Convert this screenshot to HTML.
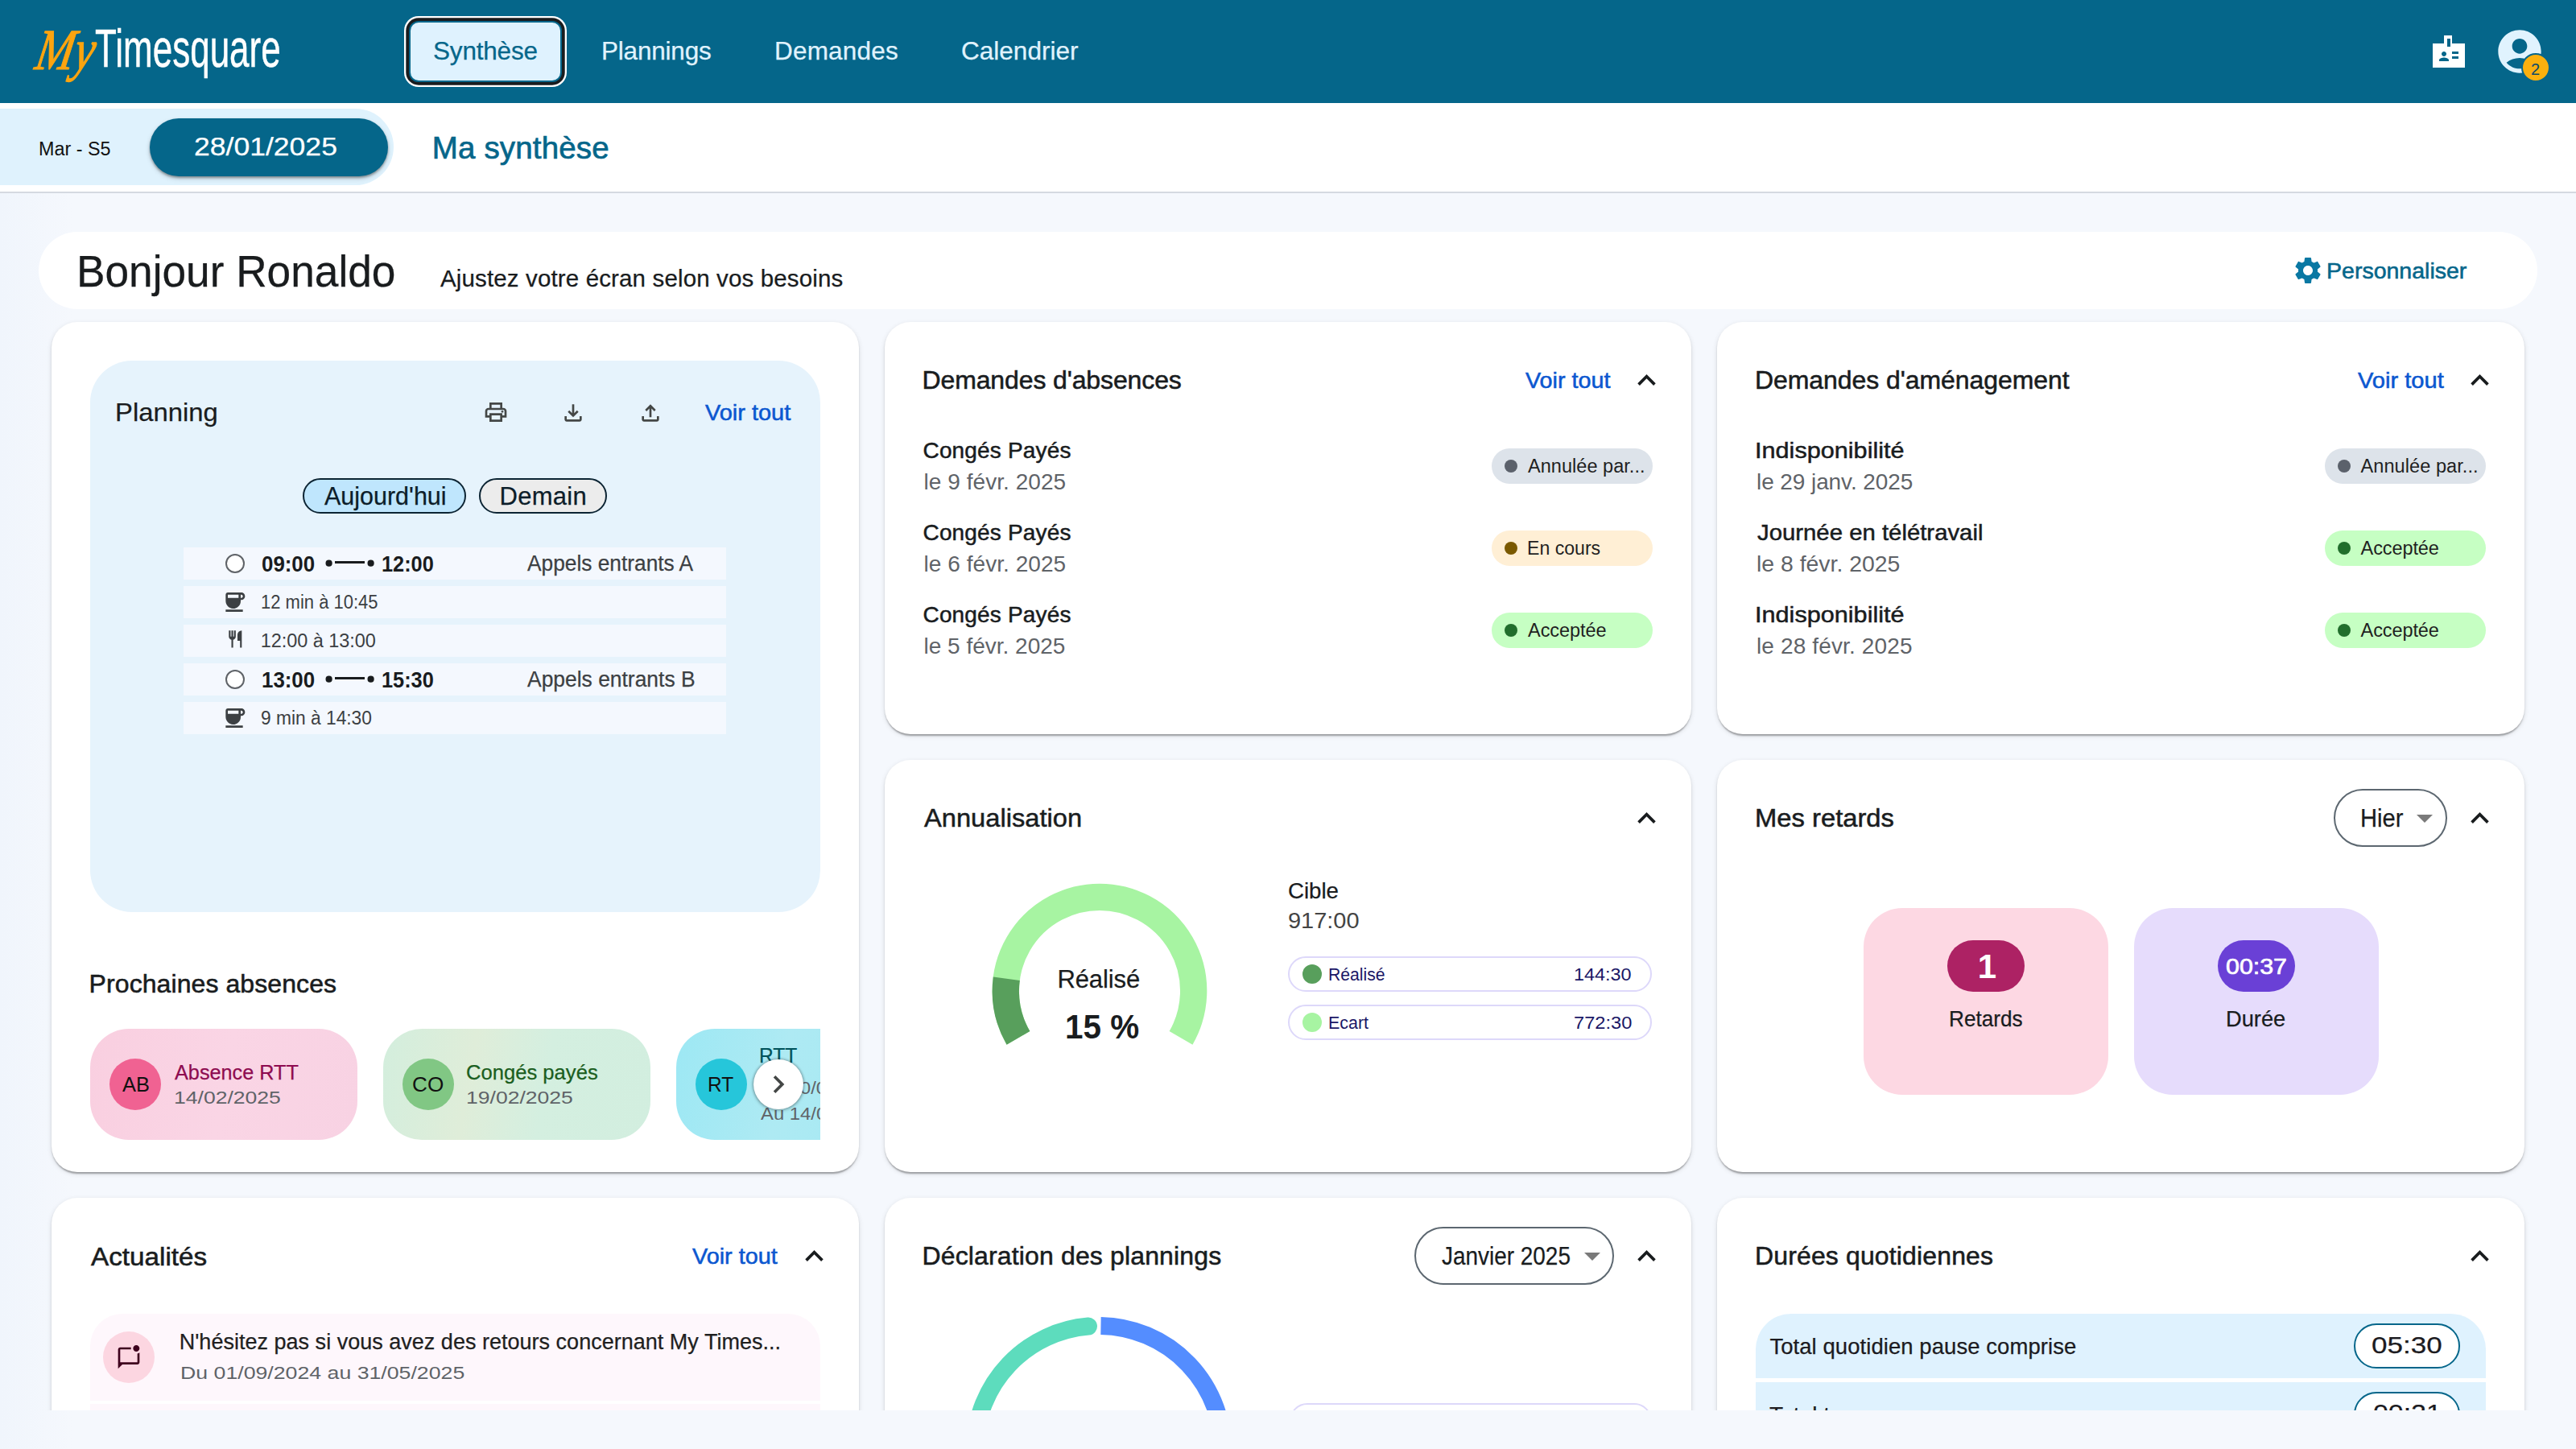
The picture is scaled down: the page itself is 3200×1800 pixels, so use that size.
<!DOCTYPE html>
<html lang="fr"><head><meta charset="utf-8"><title>My Timesquare - Ma synthèse</title>
<style>
html,body{margin:0;padding:0}
body{width:3200px;height:1800px;overflow:hidden;position:relative;background:#f5f8fd;font-family:"Liberation Sans",sans-serif}
.t{position:absolute;white-space:nowrap;display:block}
.a{position:absolute;box-sizing:border-box}
.card{position:absolute;box-sizing:border-box;background:#fff;border-radius:32px;width:1002.67px;box-shadow:0 4px 2px -2px rgba(0,0,0,.2),0 2px 2px 0 rgba(0,0,0,.14),0 2px 6px 0 rgba(0,0,0,.12)}
.row{position:absolute;left:228px;width:674px;height:40px;background:#f4f8fe}
.chip{position:absolute;box-sizing:border-box;height:44px;border:2px solid #0c2433;border-radius:22px}
.st{position:absolute;width:200px;height:44px;border-radius:22px}
.st i{position:absolute;left:16px;top:14px;width:16px;height:16px;border-radius:50%}
.av{position:absolute;width:64px;height:64px;border-radius:50%}
.ab{position:absolute;width:332px;height:138px;border-radius:48px;top:1278px}
.lg{position:absolute;box-sizing:border-box;left:1600px;width:452px;height:44px;border:2px solid #ddd8fa;border-radius:22px;background:#fff}
.lg i{position:absolute;left:16px;top:8px;width:24px;height:24px;border-radius:50%}
.dd{position:absolute;box-sizing:border-box;height:72px;border:2px solid #5c6770;border-radius:36px;background:#fff}
.tri{position:absolute;width:0;height:0;border-left:10px solid transparent;border-right:10px solid transparent;border-top:10px solid #7a7a7a}
svg{position:absolute;overflow:visible}
</style></head>
<body>
<div class="a" style="left:0;top:240px;width:90px;height:1560px;background:linear-gradient(90deg,#f0f5fc 0,#f5f8fd 100%)"></div>
<!-- ================= scroll area ================= -->
<div class="a" style="left:0;top:240px;width:3200px;height:1512px;overflow:hidden">
<div class="a" style="left:0;top:-240px;width:3200px;height:2100px">
<!-- hello bar -->
<div class="a" style="left:48px;top:288px;width:3104px;height:96px;border-radius:48px;background:#fff"></div>
<svg style="left:2846.500px;top:316px" width="40" height="40" viewBox="0 0 24 24"><path fill="#0a78a3" d="M19.140 12.940c.040-.3.060-.61.060-.940 0-.320-.020-.640-.070-.940l2.030-1.580c.180-.140.230-.410.120-.610l-1.920-3.320c-.120-.220-.370-.290-.590-.220l-2.390.96c-.5-.380-1.030-.7-1.620-.94l-.36-2.540c-.040-.240-.240-.410-.480-.410h-3.840c-.240 0-.430.170-.470.410l-.36 2.540c-.59.240-1.130.57-1.620.94l-2.390-.96c-.220-.080-.470 0-.59.220L2.740 8.870c-.12.210-.08.470.12.610l2.030 1.580c-.050.3-.090.630-.090.940s.020.640.070.940l-2.030 1.580c-.180.140-.230.410-.120.610l1.920 3.320c.12.220.370.290.590.220l2.390-.96c.5.380 1.030.7 1.620.94l.36 2.540c.050.240.240.410.480.410h3.840c.240 0 .440-.170.470-.410l.36-2.540c.59-.240 1.130-.560 1.620-.940l2.390.96c.220.080.470 0 .59-.220l1.920-3.320c.12-.220.070-.470-.12-.610l-2.010-1.580zM12 15.600c-1.980 0-3.600-1.620-3.600-3.600s1.620-3.600 3.600-3.600 3.600 1.620 3.600 3.600-1.620 3.600-3.600 3.600z"/></svg>

<!-- cards -->
<div class="card" style="left:64px;top:400px;height:1056px"></div>
<div class="card" style="left:1098.67px;top:400px;height:512px"></div>
<div class="card" style="left:2133.33px;top:400px;height:512px"></div>
<div class="card" style="left:1098.67px;top:944px;height:512px"></div>
<div class="card" style="left:2133.33px;top:944px;height:512px"></div>
<div class="card" style="left:64px;top:1488px;height:512px"></div>
<div class="card" style="left:1098.67px;top:1488px;height:512px"></div>
<div class="card" style="left:2133.33px;top:1488px;height:512px"></div>

<!-- ===== card 1 : planning ===== -->
<div class="a" style="left:112px;top:448px;width:906.67px;height:685px;border-radius:52px;background:#e6f3fc"></div>
<svg style="left:600px;top:496px" width="32" height="32" viewBox="0 0 24 24"><path fill="#444746" d="M19 8h-1V3H6v5H5c-1.660 0-3 1.340-3 3v6h4v4h12v-4h4v-6c0-1.660-1.340-3-3-3zM8 5h8v3H8V5zm8 14H8v-4h8v4zm2-4v-2H6v2H4v-4c0-.550.450-1 1-1h14c.550 0 1 .450 1 1v4h-2z"/><circle fill="#444746" cx="18" cy="11.500" r="1"/></svg>
<svg style="left:696px;top:496.500px" width="32" height="32" viewBox="0 0 24 24"><path fill="#444746" d="M18 15v3H6v-3H4v3c0 1.100.9 2 2 2h12c1.100 0 2-.9 2-2v-3h-2zm-1-4l-1.410-1.410L13 12.170V4h-2v8.170L8.410 9.590 7 11l5 5 5-5z"/></svg>
<svg style="left:792px;top:496.500px" width="32" height="32" viewBox="0 0 24 24"><path fill="#444746" d="M18 15v3H6v-3H4v3c0 1.100.9 2 2 2h12c1.100 0 2-.9 2-2v-3h-2zM7 9l1.410 1.410L11 7.830V16h2V7.830l2.590 2.580L17 9l-5-5-5 5z"/></svg>
<div class="chip" style="left:376px;top:594px;width:203px;background:#bfe6fd"></div>
<div class="chip" style="left:595px;top:594px;width:159px;background:#ececec"></div>
<div class="row" style="top:680px"></div><div class="row" style="top:728px"></div><div class="row" style="top:776px"></div><div class="row" style="top:824px"></div><div class="row" style="top:872px"></div>
<div class="a" style="left:279.800px;top:687.700px;width:24px;height:24px;border-radius:50%;border:2px solid #5f6368;background:#fff"></div>
<div class="a" style="left:279.800px;top:831.700px;width:24px;height:24px;border-radius:50%;border:2px solid #5f6368;background:#fff"></div>
<svg style="left:404px;top:695px" width="62" height="10" viewBox="0 0 62 10"><circle cx="4.600" cy="4.700" r="4.100" fill="#191c1e"/><circle cx="56.600" cy="4.700" r="4.100" fill="#191c1e"/><rect x="12" y="2" width="37" height="3" fill="#191c1e"/></svg>
<svg style="left:404px;top:839px" width="62" height="10" viewBox="0 0 62 10"><circle cx="4.600" cy="4.700" r="4.100" fill="#191c1e"/><circle cx="56.600" cy="4.700" r="4.100" fill="#191c1e"/><rect x="12" y="2" width="37" height="3" fill="#191c1e"/></svg>
<svg style="left:275px;top:732.400px" width="32" height="32" viewBox="0 0 24 24"><path fill="#3c4043" d="M18.500 3H6c-1.100 0-2 .9-2 2v5.710c0 3.830 2.950 7.180 6.780 7.290 3.960.12 7.220-3.060 7.220-7v-1h.5c1.930 0 3.500-1.570 3.500-3.500S20.430 3 18.500 3zM16 5v3H6V5h10zm2.500 3H18V5h.5c.83 0 1.500.67 1.500 1.500S19.330 8 18.500 8zM4 19h16v2H4v-2z"/></svg>
<svg style="left:275px;top:876.400px" width="32" height="32" viewBox="0 0 24 24"><path fill="#3c4043" d="M18.500 3H6c-1.100 0-2 .9-2 2v5.710c0 3.830 2.950 7.180 6.780 7.290 3.960.12 7.220-3.060 7.220-7v-1h.5c1.930 0 3.500-1.570 3.500-3.500S20.430 3 18.500 3zM16 5v3H6V5h10zm2.500 3H18V5h.5c.83 0 1.500.67 1.500 1.500S19.330 8 18.500 8zM4 19h16v2H4v-2z"/></svg>
<svg style="left:279.800px;top:781.400px" width="25.700" height="25.700" viewBox="0 -960 960 960"><path fill="#3c4043" d="M280-80v-366q-51-14-85.500-56T160-600v-280h80v280h40v-280h80v280h40v-280h80v280q0 56-34.500 98T360-446v366h-80Zm400 0v-320H560v-280q0-83 58.500-141.500T760-880v800h-80Z"/></svg>
<!-- absences -->
<div class="ab" style="left:112px;background:linear-gradient(100deg,#f9cfe0 0%,#fad5e5 50%,#f8d2e3 100%)"></div>
<div class="av" style="left:136px;top:1315px;background:#f06292"></div>
<div class="ab" style="left:476px;background:linear-gradient(100deg,#d3eedd 0%,#dfedd9 33%,#d4efe0 60%,#d2eedf 100%)"></div>
<div class="av" style="left:500px;top:1315px;background:#81c784"></div>

<!-- ===== card 6 : actualités ===== -->
<div class="a" style="left:112px;top:1631.500px;width:906.67px;height:108.500px;border-radius:40px 40px 0 0;background:#fef7fc"></div>
<div class="a" style="left:112px;top:1744px;width:906.67px;height:108px;background:#fef7fc"></div>
<div class="av" style="left:128px;top:1653.800px;background:#fcd6e1"></div>
<svg style="left:143.900px;top:1670.700px" width="32" height="32" viewBox="0 0 24 24"><path fill="#3e001d" d="M22 6.980V16c0 1.100-.9 2-2 2H6l-4 4V4c0-1.100.9-2 2-2h10.100c-.06.320-.1.660-.1 1s.040.680.1 1H4v12h16V7.900c.74-.15 1.420-.48 2-.92zM16 3c0 1.660 1.340 3 3 3s3-1.340 3-3-1.340-3-3-3-3 1.340-3 3z"/></svg>
<svg style="left:988.500px;top:1537.500px" width="45" height="45" viewBox="0 0 24 24"><path fill="#191c1e" d="M12 8l-6 6 1.410 1.410L12 10.830l4.590 4.580L18 14z"/></svg>

<!-- ===== card 2 ===== -->
<svg style="left:2022.500px;top:449.800px" width="45" height="45" viewBox="0 0 24 24"><path fill="#191c1e" d="M12 8l-6 6 1.410 1.410L12 10.830l4.590 4.580L18 14z"/></svg>
<div class="st" style="left:1853px;top:557px;background:#dde3ea"><i style="background:#5b616b"></i></div>
<div class="st" style="left:1853px;top:659px;background:#ffefd5"><i style="background:#7a5900"></i></div>
<div class="st" style="left:1853px;top:761px;background:#c6ffc3"><i style="background:#216e2c"></i></div>
<!-- ===== card 3 ===== -->
<svg style="left:3057.500px;top:449.800px" width="45" height="45" viewBox="0 0 24 24"><path fill="#191c1e" d="M12 8l-6 6 1.410 1.410L12 10.830l4.590 4.580L18 14z"/></svg>
<div class="st" style="left:2888px;top:557px;background:#dde3ea"><i style="background:#5b616b"></i></div>
<div class="st" style="left:2888px;top:659px;background:#c6ffc3"><i style="background:#216e2c"></i></div>
<div class="st" style="left:2888px;top:761px;background:#c6ffc3"><i style="background:#216e2c"></i></div>

<!-- ===== card 4 : annualisation ===== -->
<svg style="left:2022.500px;top:993.800px" width="45" height="45" viewBox="0 0 24 24"><path fill="#191c1e" d="M12 8l-6 6 1.410 1.410L12 10.830l4.590 4.580L18 14z"/></svg>
<svg style="left:1215.600px;top:1081px" width="300" height="300" viewBox="-150 -150 300 300">
<path d="M -101.040 58.330 A 116.670 116.670 0 1 1 101.040 58.330" fill="none" stroke="#a7f4a2" stroke-width="33.300"/>
<path d="M -101.040 58.330 A 116.670 116.670 0 0 1 -115.670 -15.230" fill="none" stroke="#589f5c" stroke-width="33.300"/>
</svg>
<div class="lg" style="top:1188px"><i style="background:#589f5c"></i></div>
<div class="lg" style="top:1248px"><i style="background:#a7f4a2"></i></div>

<!-- ===== card 5 : retards ===== -->
<svg style="left:3057.500px;top:993.600px" width="45" height="45" viewBox="0 0 24 24"><path fill="#191c1e" d="M12 8l-6 6 1.410 1.410L12 10.830l4.590 4.580L18 14z"/></svg>
<div class="dd" style="left:2899px;top:980px;width:141px"></div>
<div class="tri" style="left:3001.700px;top:1012px"></div>
<div class="a" style="left:2315px;top:1128px;width:304px;height:232px;border-radius:48px;background:#fdd8e3"></div>
<div class="a" style="left:2651px;top:1128px;width:304px;height:232px;border-radius:48px;background:#e6dcfc"></div>
<div class="a" style="left:2419px;top:1168px;width:96px;height:64px;border-radius:32px;background:#ad2264"></div>
<div class="a" style="left:2755px;top:1168px;width:96px;height:64px;border-radius:32px;background:#6a40d6"></div>

<!-- ===== card 7 : déclaration ===== -->
<svg style="left:2022.500px;top:1537.500px" width="45" height="45" viewBox="0 0 24 24"><path fill="#191c1e" d="M12 8l-6 6 1.410 1.410L12 10.830l4.590 4.580L18 14z"/></svg>
<div class="dd" style="left:1757px;top:1524px;width:248px"></div>
<div class="tri" style="left:1967.500px;top:1556px"></div>
<svg style="left:1165px;top:1601px" width="400" height="400" viewBox="-200 -200 400 400">
<path d="M -153.900 -5 A 154 154 0 0 1 -13 -153.450" fill="none" stroke="#5ddcbd" stroke-width="22" stroke-linecap="round"/>
<path d="M 2.500 -153.980 A 154 154 0 0 1 153.900 5" fill="none" stroke="#548dff" stroke-width="22" stroke-linecap="butt"/>
</svg>
<div class="lg" style="left:1602px;top:1743px;width:450px"></div>

<!-- ===== card 8 : durées ===== -->
<svg style="left:3057.500px;top:1537.500px" width="45" height="45" viewBox="0 0 24 24"><path fill="#191c1e" d="M12 8l-6 6 1.410 1.410L12 10.830l4.590 4.580L18 14z"/></svg>
<div class="a" style="left:2181px;top:1632px;width:907px;height:80px;border-radius:44px 44px 0 0;background:#dff2fe"></div>
<div class="a" style="left:2181px;top:1716.500px;width:907px;height:80px;background:#dff2fe"></div>
<div class="a" style="left:2924px;top:1644px;width:132px;height:56px;border-radius:28px;background:#fff;border:2px solid #05668a"></div>
<div class="a" style="left:2924px;top:1728.500px;width:132px;height:56px;border-radius:28px;background:#fff;border:2px solid #05668a"></div>

<span class="t" style="left:95.13px;top:310.20px;font-size:55px;line-height:55px;color:#191c1e;transform-origin:0 0;transform:scaleX(0.9675);-webkit-text-stroke:0.25px #191c1e;">Bonjour Ronaldo</span>
<span class="t" style="left:547.00px;top:331.45px;font-size:29.5px;line-height:29.5px;color:#191c1e;letter-spacing:0.140px;-webkit-text-stroke:0.25px #191c1e;">Ajustez votre écran selon vos besoins</span>
<span class="t" style="left:2889.96px;top:323.10px;font-size:28px;line-height:28px;color:#05668a;transform-origin:0 0;transform:scaleX(1.0185);-webkit-text-stroke:0.55px #05668a;">Personnaliser</span>
<span class="t" style="left:142.95px;top:496.30px;font-size:32px;line-height:32px;color:#191c1e;transform-origin:0 0;transform:scaleX(1.0253);-webkit-text-stroke:0.25px #191c1e;">Planning</span>
<span class="t" style="left:876.00px;top:498.50px;font-size:28px;line-height:28px;color:#0b57d0;transform-origin:0 0;transform:scaleX(1.0345);-webkit-text-stroke:0.55px #0b57d0;">Voir tout</span>
<span class="t" style="left:402.60px;top:601.00px;font-size:31px;line-height:31px;color:#0c1d29;transform-origin:0 0;transform:scaleX(0.9833);-webkit-text-stroke:0.25px #0c1d29;">Aujourd'hui</span>
<span class="t" style="left:620.60px;top:601.00px;font-size:31px;line-height:31px;color:#0c1d29;letter-spacing:0.244px;-webkit-text-stroke:0.25px #0c1d29;">Demain</span>
<span class="t" style="left:324.54px;top:687.80px;font-size:27px;line-height:27px;color:#191c1e;font-weight:700;transform-origin:0 0;transform:scaleX(0.9576);">09:00</span>
<span class="t" style="left:473.66px;top:687.80px;font-size:27px;line-height:27px;color:#191c1e;font-weight:700;transform-origin:0 0;transform:scaleX(0.9383);">12:00</span>
<span class="t" style="left:655.00px;top:687.20px;font-size:27px;line-height:27px;color:#3c4043;transform-origin:0 0;transform:scaleX(0.9741);-webkit-text-stroke:0.25px #3c4043;">Appels entrants A</span>
<span class="t" style="left:324.54px;top:831.80px;font-size:27px;line-height:27px;color:#191c1e;font-weight:700;transform-origin:0 0;transform:scaleX(0.9576);">13:00</span>
<span class="t" style="left:473.66px;top:831.80px;font-size:27px;line-height:27px;color:#191c1e;font-weight:700;transform-origin:0 0;transform:scaleX(0.9383);">15:30</span>
<span class="t" style="left:655.00px;top:831.20px;font-size:27px;line-height:27px;color:#3c4043;transform-origin:0 0;transform:scaleX(0.9787);-webkit-text-stroke:0.25px #3c4043;">Appels entrants B</span>
<span class="t" style="left:323.86px;top:736.75px;font-size:23.5px;line-height:23.5px;color:#3c4043;transform-origin:0 0;transform:scaleX(0.9365);">12 min à 10:45</span>
<span class="t" style="left:323.80px;top:784.75px;font-size:23.5px;line-height:23.5px;color:#3c4043;letter-spacing:-0.056px;">12:00 à 13:00</span>
<span class="t" style="left:323.83px;top:880.75px;font-size:23.5px;line-height:23.5px;color:#3c4043;transform-origin:0 0;transform:scaleX(0.9687);">9 min à 14:30</span>
<span class="t" style="left:110.60px;top:1206.00px;font-size:32px;line-height:32px;color:#191c1e;letter-spacing:0.080px;-webkit-text-stroke:0.55px #191c1e;">Prochaines absences</span>
<span class="t" style="left:151.50px;top:1335.20px;font-size:25px;line-height:25px;color:#111;transform-origin:0 0;transform:scaleX(1.0161);">AB</span>
<span class="t" style="left:511.95px;top:1335.20px;font-size:25px;line-height:25px;color:#111;transform-origin:0 0;transform:scaleX(1.0456);">CO</span>
<span class="t" style="left:216.80px;top:1319.00px;font-size:26px;line-height:26px;color:#8e0b50;transform-origin:0 0;transform:scaleX(0.9710);-webkit-text-stroke:0.25px #8e0b50;">Absence RTT</span>
<span class="t" style="left:215.62px;top:1352.95px;font-size:22.5px;line-height:22.5px;color:#5f6368;transform-origin:0 0;transform:scaleX(1.1792);">14/02/2025</span>
<span class="t" style="left:579.32px;top:1319.00px;font-size:26px;line-height:26px;color:#1b5e20;transform-origin:0 0;transform:scaleX(0.9847);-webkit-text-stroke:0.25px #1b5e20;">Congés payés</span>
<span class="t" style="left:579.12px;top:1352.95px;font-size:22.5px;line-height:22.5px;color:#5f6368;transform-origin:0 0;transform:scaleX(1.1792);">19/02/2025</span>
<span class="t" style="left:112.60px;top:1544.50px;font-size:32px;line-height:32px;color:#191c1e;transform-origin:0 0;transform:scaleX(1.0390);-webkit-text-stroke:0.55px #191c1e;">Actualités</span>
<span class="t" style="left:860.30px;top:1546.50px;font-size:28px;line-height:28px;color:#0b57d0;transform-origin:0 0;transform:scaleX(1.0296);-webkit-text-stroke:0.55px #0b57d0;">Voir tout</span>
<span class="t" style="left:222.70px;top:1653.50px;font-size:27px;line-height:27px;color:#1f1f1f;letter-spacing:0.014px;-webkit-text-stroke:0.25px #1f1f1f;">N'hésitez pas si vous avez des retours concernant My Times...</span>
<span class="t" style="left:223.53px;top:1694.30px;font-size:22.8px;line-height:22.8px;color:#5f6368;transform-origin:0 0;transform:scaleX(1.1709);">Du 01/09/2024 au 31/05/2025</span>
<span class="t" style="left:1145.50px;top:456.00px;font-size:32px;line-height:32px;color:#191c1e;letter-spacing:-0.124px;-webkit-text-stroke:0.55px #191c1e;">Demandes d'absences</span>
<span class="t" style="left:1894.80px;top:458.50px;font-size:28px;line-height:28px;color:#0b57d0;transform-origin:0 0;transform:scaleX(1.0277);-webkit-text-stroke:0.55px #0b57d0;">Voir tout</span>
<span class="t" style="left:1146.50px;top:545.80px;font-size:28px;line-height:28px;color:#191c1e;letter-spacing:0.163px;-webkit-text-stroke:0.5px #191c1e;">Congés Payés</span>
<span class="t" style="left:1147.50px;top:584.90px;font-size:28px;line-height:28px;color:#5f6368;letter-spacing:0.055px;">le 9 févr. 2025</span>
<span class="t" style="left:1898.00px;top:567.55px;font-size:23.5px;line-height:23.5px;color:#1f1f1f;letter-spacing:0.039px;">Annulée par...</span>
<span class="t" style="left:1146.50px;top:647.80px;font-size:28px;line-height:28px;color:#191c1e;letter-spacing:0.163px;-webkit-text-stroke:0.5px #191c1e;">Congés Payés</span>
<span class="t" style="left:1147.50px;top:686.90px;font-size:28px;line-height:28px;color:#5f6368;letter-spacing:0.055px;">le 6 févr. 2025</span>
<span class="t" style="left:1897.02px;top:669.55px;font-size:23.5px;line-height:23.5px;color:#1f1f1f;transform-origin:0 0;transform:scaleX(0.9825);">En cours</span>
<span class="t" style="left:1146.50px;top:749.80px;font-size:28px;line-height:28px;color:#191c1e;letter-spacing:0.163px;-webkit-text-stroke:0.5px #191c1e;">Congés Payés</span>
<span class="t" style="left:1147.50px;top:788.90px;font-size:28px;line-height:28px;color:#5f6368;">le 5 févr. 2025</span>
<span class="t" style="left:1898.00px;top:771.55px;font-size:23.5px;line-height:23.5px;color:#1f1f1f;letter-spacing:-0.045px;">Acceptée</span>
<span class="t" style="left:2180.00px;top:456.00px;font-size:32px;line-height:32px;color:#191c1e;letter-spacing:-0.073px;-webkit-text-stroke:0.55px #191c1e;">Demandes d'aménagement</span>
<span class="t" style="left:2929.00px;top:458.50px;font-size:28px;line-height:28px;color:#0b57d0;transform-origin:0 0;transform:scaleX(1.0393);-webkit-text-stroke:0.55px #0b57d0;">Voir tout</span>
<span class="t" style="left:2180.31px;top:545.80px;font-size:28px;line-height:28px;color:#191c1e;transform-origin:0 0;transform:scaleX(1.0940);-webkit-text-stroke:0.5px #191c1e;">Indisponibilité</span>
<span class="t" style="left:2182.00px;top:584.90px;font-size:28px;line-height:28px;color:#5f6368;letter-spacing:-0.084px;">le 29 janv. 2025</span>
<span class="t" style="left:2932.60px;top:567.55px;font-size:23.5px;line-height:23.5px;color:#1f1f1f;letter-spacing:0.069px;">Annulée par...</span>
<span class="t" style="left:2182.50px;top:647.80px;font-size:28px;line-height:28px;color:#191c1e;transform-origin:0 0;transform:scaleX(1.0476);-webkit-text-stroke:0.5px #191c1e;">Journée en télétravail</span>
<span class="t" style="left:2181.99px;top:686.90px;font-size:28px;line-height:28px;color:#5f6368;transform-origin:0 0;transform:scaleX(1.0142);">le 8 févr. 2025</span>
<span class="t" style="left:2932.60px;top:669.55px;font-size:23.5px;line-height:23.5px;color:#1f1f1f;letter-spacing:-0.102px;">Acceptée</span>
<span class="t" style="left:2180.31px;top:749.80px;font-size:28px;line-height:28px;color:#191c1e;transform-origin:0 0;transform:scaleX(1.0940);-webkit-text-stroke:0.5px #191c1e;">Indisponibilité</span>
<span class="t" style="left:2182.00px;top:788.90px;font-size:28px;line-height:28px;color:#5f6368;letter-spacing:0.140px;">le 28 févr. 2025</span>
<span class="t" style="left:2932.60px;top:771.55px;font-size:23.5px;line-height:23.5px;color:#1f1f1f;letter-spacing:-0.102px;">Acceptée</span>
<span class="t" style="left:1147.50px;top:1000.00px;font-size:32px;line-height:32px;color:#191c1e;transform-origin:0 0;transform:scaleX(1.0203);-webkit-text-stroke:0.5px #191c1e;">Annualisation</span>
<span class="t" style="left:1313.40px;top:1200.60px;font-size:31px;line-height:31px;color:#191c1e;letter-spacing:-0.091px;-webkit-text-stroke:0.25px #191c1e;">Réalisé</span>
<span class="t" style="left:1323.02px;top:1253.90px;font-size:43px;line-height:43px;color:#191c1e;font-weight:700;transform-origin:0 0;transform:scaleX(0.9407);">15 %</span>
<span class="t" style="left:1599.58px;top:1093.80px;font-size:27px;line-height:27px;color:#191c1e;transform-origin:0 0;transform:scaleX(1.0233);-webkit-text-stroke:0.25px #191c1e;">Cible</span>
<span class="t" style="left:1599.53px;top:1131.20px;font-size:27px;line-height:27px;color:#444;transform-origin:0 0;transform:scaleX(1.0724);">917:00</span>
<span class="t" style="left:1649.86px;top:1199.55px;font-size:22.5px;line-height:22.5px;color:#1a1766;transform-origin:0 0;transform:scaleX(0.9412);">Réalisé</span>
<span class="t" style="left:1955.46px;top:1199.55px;font-size:22.5px;line-height:22.5px;color:#1a1766;transform-origin:0 0;transform:scaleX(1.0400);">144:30</span>
<span class="t" style="left:1649.85px;top:1259.55px;font-size:22.5px;line-height:22.5px;color:#1a1766;transform-origin:0 0;transform:scaleX(0.9529);">Ecart</span>
<span class="t" style="left:1954.65px;top:1259.55px;font-size:22.5px;line-height:22.5px;color:#1a1766;transform-origin:0 0;transform:scaleX(1.0519);">772:30</span>
<span class="t" style="left:2179.95px;top:1000.00px;font-size:32px;line-height:32px;color:#191c1e;transform-origin:0 0;transform:scaleX(1.0239);-webkit-text-stroke:0.55px #191c1e;">Mes retards</span>
<span class="t" style="left:2931.52px;top:1001.00px;font-size:31px;line-height:31px;color:#191c1e;transform-origin:0 0;transform:scaleX(0.9392);-webkit-text-stroke:0.25px #191c1e;">Hier</span>
<span class="t" style="left:2456.80px;top:1180.10px;font-size:42px;line-height:42px;color:#fff;font-weight:700;">1</span>
<span class="t" style="left:2420.83px;top:1252.10px;font-size:28px;line-height:28px;color:#191c1e;transform-origin:0 0;transform:scaleX(0.9354);-webkit-text-stroke:0.25px #191c1e;">Retards</span>
<span class="t" style="left:2764.62px;top:1186.50px;font-size:28px;line-height:28px;color:#fff;transform-origin:0 0;transform:scaleX(1.0847);-webkit-text-stroke:0.7px #fff;">00:37</span>
<span class="t" style="left:2765.05px;top:1252.10px;font-size:28px;line-height:28px;color:#191c1e;transform-origin:0 0;transform:scaleX(0.9730);-webkit-text-stroke:0.25px #191c1e;">Durée</span>
<span class="t" style="left:1145.50px;top:1544.00px;font-size:32px;line-height:32px;color:#191c1e;letter-spacing:0.144px;-webkit-text-stroke:0.55px #191c1e;">Déclaration des plannings</span>
<span class="t" style="left:1790.70px;top:1545.00px;font-size:31px;line-height:31px;color:#191c1e;transform-origin:0 0;transform:scaleX(0.9009);-webkit-text-stroke:0.25px #191c1e;">Janvier 2025</span>
<span class="t" style="left:2180.00px;top:1544.00px;font-size:32px;line-height:32px;color:#191c1e;letter-spacing:0.137px;-webkit-text-stroke:0.55px #191c1e;">Durées quotidiennes</span>
<span class="t" style="left:2198.40px;top:1658.75px;font-size:27.5px;line-height:27.5px;color:#1c1b1f;letter-spacing:0.061px;-webkit-text-stroke:0.25px #1c1b1f;">Total quotidien pause comprise</span>
<span class="t" style="left:2945.61px;top:1656.15px;font-size:29.5px;line-height:29.5px;color:#1c1b1f;transform-origin:0 0;transform:scaleX(1.1876);-webkit-text-stroke:0.25px #1c1b1f;">05:30</span>
<span class="t" style="left:2198.40px;top:1743.75px;font-size:27.5px;line-height:27.5px;color:#1c1b1f;transform-origin:0 0;transform:scaleX(1.0229);-webkit-text-stroke:0.25px #1c1b1f;">Total temps pauses</span>
<span class="t" style="left:2947.85px;top:1740.15px;font-size:29.5px;line-height:29.5px;color:#1c1b1f;transform-origin:0 0;transform:scaleX(1.1482);-webkit-text-stroke:0.25px #1c1b1f;">00:21</span>
<div class="a" style="left:0;top:0;width:1019px;height:2100px;overflow:hidden">
<div class="ab" style="left:840px;background:linear-gradient(100deg,#9de8f4 0%,#aeeaf3 40%,#9ee8f3 100%)"></div>
<div class="av" style="left:864px;top:1315px;background:#26c6da"></div>

<span class="t" style="left:879.04px;top:1335.20px;font-size:25px;line-height:25px;color:#111;transform-origin:0 0;transform:scaleX(0.9803);">RT</span>
<span class="t" style="left:943.11px;top:1298.00px;font-size:26px;line-height:26px;color:#00525a;transform-origin:0 0;transform:scaleX(0.9442);-webkit-text-stroke:0.25px #00525a;">RTT</span>
<span class="t" style="left:943.95px;top:1340.95px;font-size:22.5px;line-height:22.5px;color:#5f6368;transform-origin:0 0;transform:scaleX(1.0540);">Du 10/02/2025</span>
<span class="t" style="left:944.50px;top:1372.95px;font-size:22.5px;line-height:22.5px;color:#5f6368;transform-origin:0 0;transform:scaleX(1.0592);">Au 14/02/2025</span>
</div>
<div class="a" style="left:935.500px;top:1316px;width:62px;height:62px;border-radius:50%;background:#fff;box-shadow:0 0 3px 1px rgba(0,0,0,.28),0 2px 5px rgba(0,0,0,.15)"></div>
<svg style="left:944.500px;top:1324.900px" width="44" height="44" viewBox="0 0 24 24"><path fill="#444746" d="M10 6L8.590 7.410 13.170 12l-4.580 4.590L10 18l6-6z"/></svg>

</div>
</div>
<!-- ================= header ================= -->
<div class="a" style="left:0;top:0;width:3200px;height:128px;background:#05668a"></div>
<!-- logo -->
<span class="t" style="left:42px;top:25.700px;font-family:'Liberation Serif','DejaVu Serif',serif;font-style:italic;font-weight:400;font-size:72px;line-height:72px;color:#fca40f;-webkit-text-stroke:1.200px #fca40f;transform-origin:0 58.600px;transform:skewX(-10deg) scaleX(.79)">My</span>
<span class="t" style="left:117.500px;top:25.700px;font-size:67.500px;line-height:67.500px;color:#fff;transform-origin:0 0;transform:scaleX(.652);-webkit-text-stroke:.5px #fff">Timesquare</span>
<!-- active nav -->
<div class="a" style="left:510px;top:28px;width:186px;height:72px;border-radius:10px;background:#dff2fe;box-shadow:0 0 0 2px #05668a,0 0 0 5.700px #1a1c1e,0 0 0 8px #fff"></div>
<!-- badge icon -->
<svg style="left:3018px;top:40px" width="48" height="48" viewBox="0 0 24 24"><path fill="#fff" d="M14 7V2H9v5H2v15h20V7h-8zM9 12c.83 0 1.5.67 1.5 1.5S9.83 15 9 15s-1.5-.67-1.5-1.5S8.170 12 9 12zm3 6H6v-.75c0-1 2-1.5 3-1.5s3 .5 3 1.500V18zm1-9h-2V4h2v5zm5 7.500h-4V15h4v1.500zm0-3h-4V12h4v1.500z"/></svg>
<!-- account -->
<svg style="left:3098px;top:32px" width="64" height="64" viewBox="0 0 24 24"><path fill="#e0f3fe" d="M12 2C6.48 2 2 6.48 2 12s4.48 10 10 10 10-4.480 10-10S17.520 2 12 2zm0 4c1.930 0 3.500 1.570 3.500 3.500S13.930 13 12 13s-3.500-1.570-3.500-3.500S10.070 6 12 6zm0 14c-2.030 0-4.430-.82-6.140-2.880C7.550 15.800 9.680 15 12 15s4.450.8 6.140 2.120C16.430 19.180 14.030 20 12 20z"/></svg>
<div class="a" style="left:3132px;top:66px;width:36px;height:36px;border-radius:50%;background:#fbb00e;border:2px solid #05668a"></div>
<!-- sub bar -->
<div class="a" style="left:0;top:128px;width:3200px;height:112px;background:#fff;border-bottom:2px solid #d5d9e1"></div>
<div class="a" style="left:0;top:135px;width:489px;height:95px;background:#dff2fd;border-radius:0 48px 48px 0"></div>
<div class="a" style="left:186px;top:147px;width:296px;height:72px;border-radius:36px;background:#05668a;box-shadow:0 2px 3px rgba(0,0,0,.35),0 3px 6px rgba(0,0,0,.15)"></div>

<span class="t" style="left:538.00px;top:48.25px;font-size:31.5px;line-height:31.5px;color:#05668a;letter-spacing:-0.188px;-webkit-text-stroke:0.25px #05668a;">Synthèse</span>
<span class="t" style="left:747.00px;top:48.25px;font-size:31.5px;line-height:31.5px;color:#e0f3fe;letter-spacing:-0.200px;-webkit-text-stroke:0.25px #e0f3fe;">Plannings</span>
<span class="t" style="left:962.00px;top:48.25px;font-size:31.5px;line-height:31.5px;color:#e0f3fe;letter-spacing:0.203px;-webkit-text-stroke:0.25px #e0f3fe;">Demandes</span>
<span class="t" style="left:1194.00px;top:48.25px;font-size:31.5px;line-height:31.5px;color:#e0f3fe;letter-spacing:0.019px;-webkit-text-stroke:0.25px #e0f3fe;">Calendrier</span>
<span class="t" style="left:3144.00px;top:76.00px;font-size:20px;line-height:20px;color:#0b4a6a;">2</span>
<span class="t" style="left:48.19px;top:174.10px;font-size:23px;line-height:23px;color:#111;transform-origin:0 0;transform:scaleX(1.0140);">Mar - S5</span>
<span class="t" style="left:241.07px;top:167.25px;font-size:31.5px;line-height:31.5px;color:#fff;transform-origin:0 0;transform:scaleX(1.1285);-webkit-text-stroke:0.25px #fff;">28/01/2025</span>
<span class="t" style="left:536.70px;top:165.25px;font-size:38.5px;line-height:38.5px;color:#05668a;letter-spacing:0.174px;-webkit-text-stroke:0.7px #05668a;">Ma synthèse</span>
</body></html>
